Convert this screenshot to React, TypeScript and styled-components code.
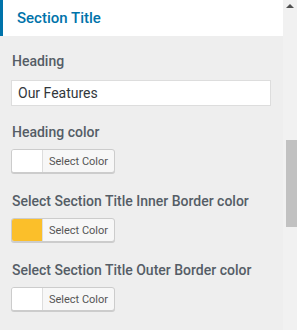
import styled, { createGlobalStyle } from "styled-components";

const GlobalStyle = createGlobalStyle`
  html, body {
    margin: 0;
    padding: 0;
    background: #eeeeee;
    font-family: Roboto, "Noto Sans", sans-serif;
  }
  * { box-sizing: border-box; }
`;

const Frame = styled.div`
  display: flex;
  width: 297px;
  height: 330px;
  overflow: hidden;
  background: #eeeeee;
`;

const Panel = styled.div`
  width: 283px;
  display: flex;
  flex-direction: column;
`;

const SectionHeader = styled.div`
  height: 41px;
  background: #ffffff;
  border-left: 3px solid #0073aa;
  padding-left: 14px;
  display: flex;
  align-items: center;
  color: #0073aa;
  font-size: 15px;
  font-weight: 500;
`;

const Body = styled.div`
  padding: 16px 12px 0 11px;
  display: flex;
  flex-direction: column;
`;

const Field = styled.div`
  display: flex;
  flex-direction: column;
  margin-bottom: 19px;
`;

const Label = styled.div`
  color: #555d66;
  font-size: 14px;
  font-weight: 500;
  line-height: 18px;
  margin-bottom: 8px;
  padding-left: 1px;
`;

const TextInput = styled.input`
  width: 260px;
  height: 26px;
  margin-top: 2px;
  margin-bottom: -2px;
  border: 1px solid #dddddd;
  background: #ffffff;
  padding: 0 6px;
  font-family: Roboto, "Noto Sans", sans-serif;
  font-size: 14px;
  color: #32373c;
  outline: none;
`;

const ColorButton = styled.button`
  display: flex;
  width: 104px;
  height: 24px;
  padding: 0;
  border: 1px solid #cccccc;
  border-radius: 3px;
  box-shadow: 0 1px 0 #cccccc;
  background: #f7f7f7;
  overflow: hidden;
  cursor: pointer;
`;

const Swatch = styled.span<{ $color: string }>`
  width: 31px;
  height: 100%;
  background: ${({ $color }) => $color};
  border-right: 1px solid #dddddd;
`;

const ButtonText = styled.span`
  flex: 1;
  display: flex;
  align-items: center;
  justify-content: center;
  font-family: Roboto, "Noto Sans", sans-serif;
  font-size: 11px;
  color: #555555;
`;

const Scrollbar = styled.div`
  width: 14px;
  background: #f1f1f1;
  display: flex;
  flex-direction: column;
  align-items: center;
`;

const Arrow = styled.div`
  margin-top: 4px;
  width: 0;
  height: 0;
  border-left: 4px solid transparent;
  border-right: 4px solid transparent;
  border-bottom: 4px solid #505050;
`;

const Thumb = styled.div`
  margin-top: 132px;
  margin-left: 2px;
  width: 11px;
  height: 87px;
  background: #c1c1c1;
`;

const colorFields = [
  { label: "Heading color", color: "#ffffff" },
  { label: "Select Section Title Inner Border color", color: "#fbbf2a" },
  { label: "Select Section Title Outer Border color", color: "#ffffff" },
];

export default function App() {
  return (
    <>
      <GlobalStyle />
      <Frame>
        <Panel>
          <SectionHeader>Section Title</SectionHeader>
          <Body>
            <Field>
              <Label>Heading</Label>
              <TextInput defaultValue="Our Features" />
            </Field>
            {colorFields.map((f) => (
              <Field key={f.label}>
                <Label>{f.label}</Label>
                <ColorButton>
                  <Swatch $color={f.color} />
                  <ButtonText>Select Color</ButtonText>
                </ColorButton>
              </Field>
            ))}
          </Body>
        </Panel>
        <Scrollbar>
          <Arrow />
          <Thumb />
        </Scrollbar>
      </Frame>
    </>
  );
}
